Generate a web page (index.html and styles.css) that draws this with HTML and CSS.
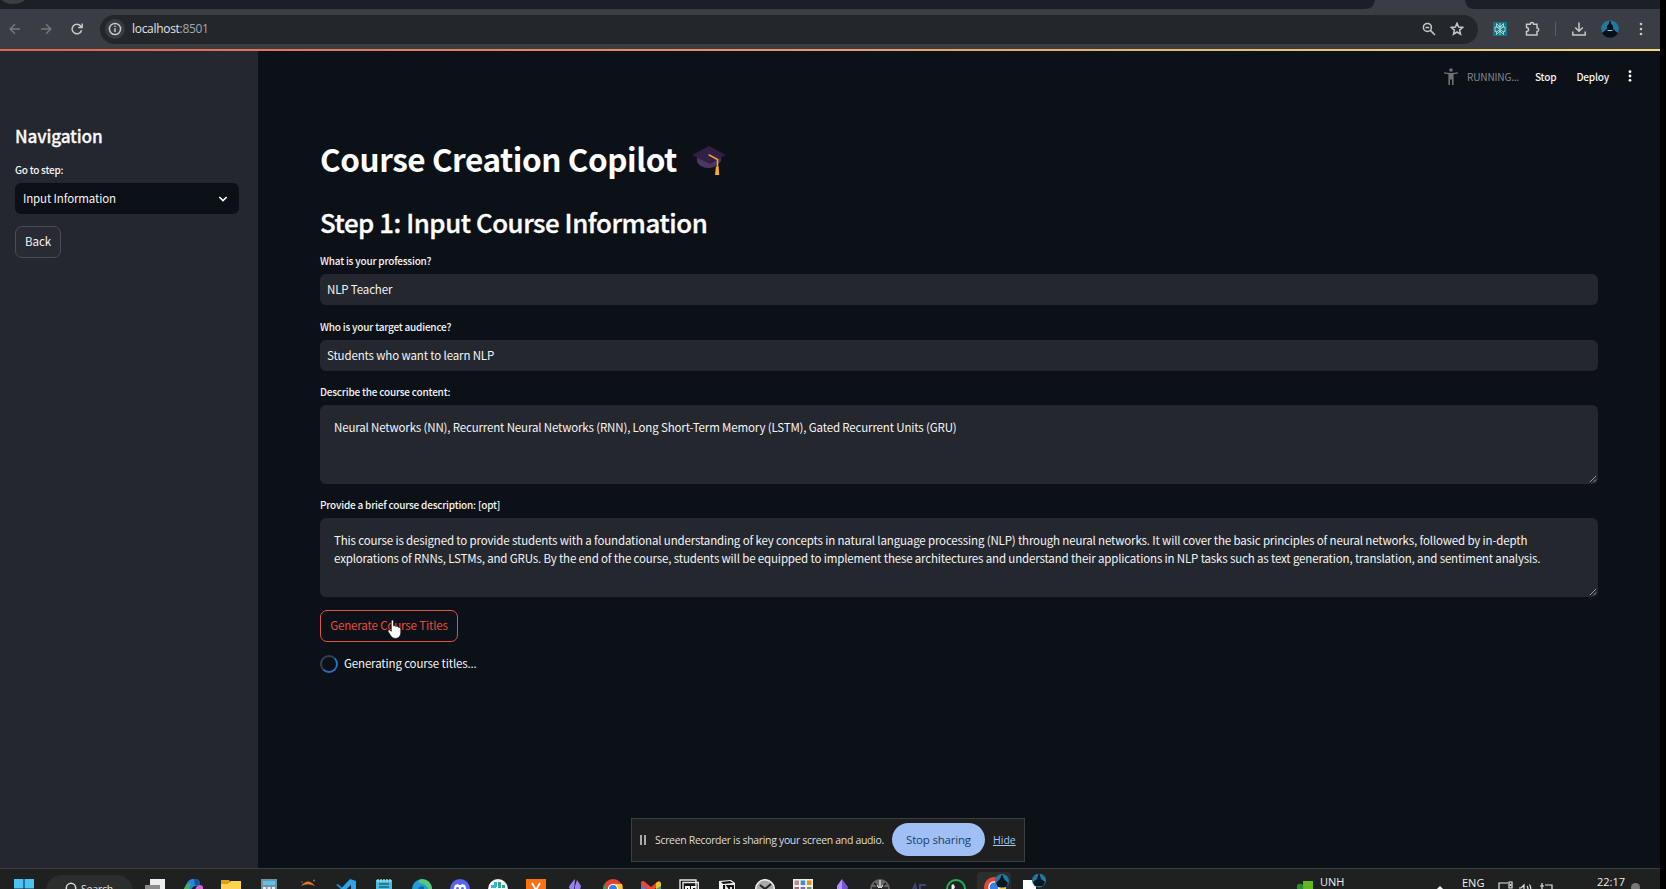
FILE: index.html
```html
<!DOCTYPE html>
<html lang="en">
<head>
<meta charset="utf-8">
<title>Course Creation Copilot</title>
<link rel="stylesheet" href="styles.css">
</head>
<body>
<div class="screen">
  <header class="browser">
    <svg class="tabstrip" width="1660" height="9" viewBox="0 0 1660 9">
      <path fill="#1a2026" d="M0 0H1375Q1374 9 1364 9H0Z"/>
      <path fill="#1a2026" d="M1465 0H1660V9H1475Q1466 9 1465 0Z"/>
      <path fill="#3a3e43" d="M2 0H25Q21 4 13 4T2 0Z"/>
    </svg>
    <div class="toolbar">
      <div class="nav-icons">
        <svg width="12" height="12" viewBox="0 0 12 12" class="line dim"><path d="M11 6H1.5M6 1.2 1.2 6 6 10.8"/></svg>
        <svg width="12" height="12" viewBox="0 0 12 12" class="line dim"><path d="M1 6H10.5M6 1.2 10.8 6 6 10.8"/></svg>
        <svg width="12" height="12" viewBox="0 0 12 12" class="line"><path d="M10.6 7.2A4.8 4.8 0 1 1 9.7 3L11 4.4M11.2.6V4.6H7.2"/></svg>
      </div>
      <div class="omnibox">
        <span class="info"><svg width="14" height="14" viewBox="0 0 14 14" class="line"><circle cx="7" cy="7" r="5.6"/><path d="M7 6.2V10M7 3.8V5"/></svg></span>
        <span class="url">localhost<span class="port">:8501</span></span>
        <svg width="14" height="14" viewBox="0 0 14 14" class="line magnify"><circle cx="5.4" cy="5.4" r="4"/><path d="M8.4 8.4 13 13M3.5 5.4H7.3"/></svg>
        <svg width="14" height="14" viewBox="0 0 14 14" class="line star"><path d="M7 1.3 8.6 5.1 12.7 5.4 9.6 8.1 10.5 12.2 7 10 3.5 12.2 4.4 8.1 1.3 5.4 5.4 5.1Z"/></svg>
      </div>
      <div class="extensions">
        <svg width="14" height="14" viewBox="0 0 14 14"><path fill="#137785" d="M0 0H14V14H0Z"/><path fill="none" stroke="#b5dfe0" stroke-width=".9" d="M7 1V13M3.5 1.5V4.7L7 7.5 10.5 4.7V1.5L7 5 3.5 1.5M2 5H12V9.5H10.5V12.5L7 9 3.5 12.5V9.5H2ZM7 7.5 3.5 10M7 7.5 10.5 10"/></svg>
        <svg width="16" height="16" viewBox="0 0 16 16" class="line"><path d="M2.5 3.2H6.2A1.7 1.7 0 0 1 9.6 3.2H13V7A1.7 1.7 0 0 1 13 10.4V14H2.5V10.6A2 2 0 0 0 2.5 6.6Z"/></svg>
        <i class="rule"></i>
        <svg width="14" height="14" viewBox="0 0 14 14" class="line"><path d="M7 .5V9M3.2 5.5 7 9.2 10.8 5.5M.8 9.5V13H13.2V9.5"/></svg>
        <svg width="18" height="18" viewBox="0 0 18 18"><circle cx="9" cy="9" r="8.8" fill="#2278a0"/><path fill="#071018" d="M8.5 1H9.5L10.3 4 12 6V9L15.5 12 17 13Q14.5 17.5 9 17.8 3.5 17.5 1 13L6 9V6L7.7 4Z"/><path stroke="#8fd3df" d="M6.5 10.5H11.5"/></svg>
        <svg width="4" height="14" viewBox="0 0 4 14" fill="#c8c9cc"><circle cx="2" cy="2" r="1.3"/><circle cx="2" cy="7" r="1.3"/><circle cx="2" cy="12" r="1.3"/></svg>
      </div>
    </div>
    <div class="accent"></div>
  </header>

  <div class="app">
    <aside class="sidebar">
      <h2 class="side-title">Navigation</h2>
      <div class="label side-label">Go to step:</div>
      <div class="select"><span>Input Information</span><svg width="10" height="8" viewBox="0 0 10 8"><path fill="none" stroke="#fff" stroke-width="1.6" d="M1.3 2 5 5.6 8.7 2"/></svg></div>
      <button class="btn">Back</button>
    </aside>
    <main class="main">
      <div class="status">
        <svg width="14" height="17" viewBox="0 0 14 17" fill="#6f7277"><circle cx="7" cy="2" r="1.8"/><path d="M0 4.2Q7 5.6 14 4.2V5.6L9.6 6.3V17H8V11.5H6V17H4.4V6.3L0 5.6Z"/></svg>
        <span class="running">RUNNING...</span>
        <span class="stop">Stop</span>
        <span class="deploy">Deploy</span>
        <svg width="4" height="12" viewBox="0 0 4 12" fill="#fff"><circle cx="2" cy="1.7" r="1.4"/><circle cx="2" cy="6" r="1.4"/><circle cx="2" cy="10.3" r="1.4"/></svg>
      </div>
      <div class="content">
        <h1 class="title"><span class="title-text">Course Creation Copilot</span>
          <svg class="cap" width="34" height="30" viewBox="0 0 34 30"><path fill="#4c3763" d="M5 10V16Q8 22 18 22 25 21 29 15V9Z"/><path fill="#321f45" d="M0 9 17 0 34 9 18 18Z"/><path fill="none" stroke="#f9a825" stroke-width="1.5" d="M16.5 8.7 25.5 13.5V22"/><path fill="#fbaa27" d="M23.9 20.5H26.6L27.2 29H23Z"/></svg>
        </h1>
        <h2 class="step">Step 1: Input Course Information</h2>
        <div class="field first"><div class="label">What is your profession?</div><div class="input">NLP Teacher</div></div>
        <div class="field"><div class="label">Who is your target audience?</div><div class="input">Students who want to learn NLP</div></div>
        <div class="field"><div class="label">Describe the course content:</div>
          <div class="area"><div>Neural Networks (NN), Recurrent Neural Networks (RNN), Long Short-Term Memory (LSTM), Gated Recurrent Units (GRU)</div>
          <svg class="grip" width="8" height="8" viewBox="0 0 8 8"><path d="M1 7 7 1M4.5 7.2 7.2 4.5"/></svg></div></div>
        <div class="field"><div class="label">Provide a brief course description: [opt]</div>
          <div class="area"><div>This course is designed to provide students with a foundational understanding of key concepts in natural language processing (NLP) through neural networks. It will cover the basic principles of neural networks, followed by in-depth</div><div>explorations of RNNs, LSTMs, and GRUs. By the end of the course, students will be equipped to implement these architectures and understand their applications in NLP tasks such as text generation, translation, and sentiment analysis.</div>
          <svg class="grip" width="8" height="8" viewBox="0 0 8 8"><path d="M1 7 7 1M4.5 7.2 7.2 4.5"/></svg></div></div>
        <button class="btn generate">Generate Course Titles
          <svg class="hand" width="15" height="20" viewBox="0 0 15 20"><path fill="#fff" stroke="#15171b" stroke-width=".7" d="M4.3 1.7Q5.4.4 6.5 1.7V7Q7.8 5.9 8.8 7.4 10.3 6.5 11.3 8.2 13.6 7.8 13.8 10V14Q13.3 19 8.7 19.4 5.7 19.5 4 17.2L1 12.3Q.5 10.7 2.2 10.7L4.3 12.3Z"/></svg>
        </button>
        <div class="spinner-row"><i class="spinner"></i><span>Generating course titles...</span></div>
      </div>
    </main>
  </div>

  <div class="share">
    <svg width="6" height="10" viewBox="0 0 6 10"><path stroke="#d8d8d8" stroke-width="1.5" d="M1 0V10M5 0V10"/></svg>
    <span class="share-text">Screen Recorder is sharing your screen and audio.</span>
    <span class="share-stop">Stop sharing</span>
    <a class="hide">Hide</a>
  </div>

  <footer class="taskbar">
    <svg class="start" width="20" height="20" viewBox="0 0 20 20" fill="#4cc2f7"><path d="M0 0H9.5V9.5H0ZM10.5 0H20V9.5H10.5ZM0 10.5H20V20H0Z"/></svg>
    <div class="search"><svg width="12" height="14" viewBox="0 0 12 14"><circle cx="6" cy="6" r="4.7" fill="none" stroke="#ddd" stroke-width="1.5"/></svg><span>Search</span></div>
    <div class="apps">
      <svg viewBox="0 0 20 20"><path fill="#eee" d="M5 0H20V15H5Z"/><path fill="#8b8b8b" d="M0 6H15V20H0Z"/></svg>
      <svg viewBox="0 0 20 20"><path fill="#2385de" d="M1 12Q4 0 9 0H14Q17 1 17 6L12 7Q8 8 6 16Z"/><path fill="#49ac65" d="M0 12Q3 3 8 4L5 15Z"/><path fill="#19529b" d="M11 0H14Q17 1 17 6H12Z"/><path fill="#ce67d2" d="M12 12Q13 6 17 6T20 11V18H12Z"/></svg>
      <svg viewBox="0 0 20 20"><path fill="#dba016" d="M0 1H8L10 4V8H0Z"/><path fill="#ffd34e" d="M0 5H7L10 2H20V18H0Z"/></svg>
      <svg viewBox="0 0 20 20"><path fill="#7b909e" d="M2 0H18V20H2Z"/><path fill="#52c6ef" d="M4 2H16V6H4Z"/><path fill="#e4edf2" d="M4 8H7V11H4ZM8.5 8H11.5V11H8.5ZM13 8H16V11H13Z"/></svg>
      <svg viewBox="0 0 20 20"><path fill="#e57626" d="M3 7Q10-2 17 7 10 3.5 3 7Z"/><circle cx="16" cy="1.5" r="1" fill="#777"/><circle cx="4" cy="3" r=".8" fill="#777"/></svg>
      <svg viewBox="0 0 20 20"><path fill="#1888cf" d="M0 6 2 5 18 18H14Z"/><path fill="#2ba4ec" d="M14 0 20 2V20H15V6L4 16 1 14Z"/></svg>
      <svg viewBox="0 0 20 20"><path fill="#4ebbdc" d="M2 1H18V20H2Z"/><path stroke="#166982" stroke-width="1.3" d="M5 5H15M5 8H15"/><path stroke="#b7e7ee" stroke-width="1.3" d="M4 0V3M7 0V3M10 0V3M13 0V3M16 0V3"/></svg>
      <svg viewBox="0 0 20 20"><circle cx="10" cy="10" r="10" fill="#219cd7"/><path fill="#59c876" d="M9 0Q19 0 20 10L17 13Q17 6 8 4 5 3 9 0Z"/><path fill="#14649e" d="M6 10Q8 6 12 8V13H6Z"/></svg>
      <svg viewBox="0 0 20 20"><circle cx="10" cy="10" r="10" fill="#5865f2"/><path fill="#fff" d="M5 6 8 5 9 6H11L12 5 15 6 17 12H3Z"/><circle cx="7.5" cy="9.5" r="1.4" fill="#5865f2"/><circle cx="12.5" cy="9.5" r="1.4" fill="#5865f2"/></svg>
      <svg viewBox="0 0 20 20"><circle cx="10" cy="10" r="10" fill="#f3f5f5"/><path fill="#36b5d8" d="M6 3H9V8H6ZM3 6H8V9H3Z"/><path fill="#2dae82" d="M10 3H13V9H10ZM14 6H17V9H14Z"/></svg>
      <svg viewBox="0 0 20 20"><path fill="#f97316" d="M0 0H20V20H0Z"/><path fill="none" stroke="#fff" stroke-width="1.8" d="M6 4 10 11 14 4M10 11V16"/></svg>
      <svg viewBox="0 0 20 20"><path fill="#9a7ff0" d="M10 0 8 6 9 13 4 8ZM12 1 16 7 14 15H10L10 7Z"/><path fill="#9a7ff0" d="M10 0 5 6 4 9 9 13Z"/></svg>
      <svg viewBox="0 0 20 20"><circle cx="10" cy="10" r="10" fill="#e34233"/><path fill="#27a258" d="M1 5 10 20Q0 20 0 10Z"/><path fill="#f9c62a" d="M10 5H19Q22 14 10 20Z"/><circle cx="10" cy="10" r="5.2" fill="#fff"/><circle cx="10" cy="10" r="4" fill="#387ee5"/></svg>
      <svg viewBox="0 0 20 20"><path fill="#3e7fe8" d="M0 4H5V18H0Z"/><path fill="#35a957" d="M15 4H20V18H15Z"/><path fill="#e84836" d="M0 3Q2 1 4 3L10 8 16 3V8L10 13 0 6Z"/><path fill="#f5bd27" d="M15 4 18 2 20 4V7L15 10Z"/></svg>
      <svg viewBox="0 0 20 20"><path fill="#111" stroke="#e8e8e8" stroke-width="1.4" d="M1 1H17V16H1ZM4 3.5H19.3V19H4Z"/><path stroke="#eee" stroke-width="2" fill="none" d="M7 12V8H10V12M13 12V8H17"/></svg>
      <svg viewBox="0 0 20 20"><path fill="#eee" d="M2 2 14 1 18 4V18L5 19 2 15Z"/><path fill="#111" d="M4 3 13 2 16 4 6 5ZM6 6H17V17H6Z"/><path stroke="#eee" stroke-width="1.8" fill="none" d="M9 15V8L14 15V8"/></svg>
      <svg viewBox="0 0 20 20"><circle cx="10" cy="10" r="9.3" fill="#aaa" stroke="#ededed" stroke-width="1.5"/><path fill="none" stroke="#222" stroke-width="2" d="M5 6 10 10 16 5"/></svg>
      <svg viewBox="0 0 20 20"><path fill="#eee" d="M0 0H20V20H0Z"/><path fill="#b98b91" d="M1.5 1.5H6V6H1.5Z"/><path fill="#3f8fc9" d="M7.7 1.5H12.2V6H7.7Z"/><path fill="#df9418" d="M14 1.5H18.5V6H14Z"/><path fill="#a06a79" d="M1.5 8H6V12H1.5Z"/><path fill="#7c6bb1" d="M7.7 8H12.2V12H7.7Z"/><path fill="#749653" d="M14 8H18.5V12H14Z"/></svg>
      <svg viewBox="0 0 20 20"><path fill="#b093fb" d="M10 0 5 7V13L10 19Z"/><path fill="#7855cf" d="M10 0 16 8 14 16 10 19Z"/></svg>
      <svg viewBox="0 0 20 20"><circle cx="10" cy="10" r="10" fill="#656565"/><path fill="none" stroke="#161616" stroke-width="1.5" d="M10 10 4 4M10 10 16 4M2 9H18"/><path stroke="#ddd" stroke-width="1.3" d="M10 1V9M7 6 9 9M13 6 11 9"/></svg>
      <svg class="ae" viewBox="0 0 20 20"><path d="M2 17 7 6 10 17M4 12H9M18 6H12V17M12 11H17"/></svg>
      <svg viewBox="0 0 20 20"><circle cx="10" cy="10" r="9" fill="#1c2521" stroke="#22b45a" stroke-width="2"/><path fill="#eee" d="M5.5 6 7.5 5 9 8 8 10 13 14H9L5.5 10Z"/></svg>
      <svg class="active" viewBox="0 0 34 20"><circle cx="17" cy="15" r="10" fill="#e34a35"/><path fill="#f9c62a" d="M18 10H29V20H18Z"/><circle cx="17" cy="15" r="5.7" fill="#fff"/><circle cx="17" cy="15" r="4.4" fill="#387ee5"/><circle cx="25" cy="9" r="7" fill="#2278a0"/><path fill="#091820" d="M24.5 3H25.5L27 7 31 11 29 15H21L19 11 23 7Z"/></svg>
      <svg class="badge" viewBox="0 0 26 20"><path fill="#fff" d="M0 6H13V20H0Z"/><circle cx="16" cy="6.5" r="7" fill="#2278a0"/><path fill="#091820" d="M15.5 0H16.5L18 5 22 8 20 12H12L10 8 14 5Z"/></svg>
    </div>
    <div class="tray">
      <svg class="news" width="17" height="14" viewBox="0 0 17 14"><path fill="#65b51c" d="M7 0H17V14H7Z"/><circle cx="4" cy="6" r="3.2" fill="#288c31"/></svg>
      <span class="unh">UNH</span>
      <svg class="chev" width="8" height="8" viewBox="0 0 8 8"><path fill="none" stroke="#eee" stroke-width="1.5" d="M1 5 4 2 7 5"/></svg>
      <span class="eng">ENG</span>
      <svg class="sys" width="56" height="14" viewBox="0 0 56 14"><path fill="none" stroke="#e5e5e5" stroke-width="1.2" d="M10 2H1V11H13M11 1H14V7H11ZM12.5 3V5M21 7H23L26 4V12M29 5Q31 8 29 10M31.5 3.5Q34 8 31.5 11M42 5H46M44 2V8M47 4H54V12"/></svg>
      <span class="clock">22:17</span>
      <i class="dot"></i>
    </div>
  </footer>
</div>
</body>
</html>
```
FILE: styles.css
```css
* { box-sizing: border-box; }
html, body { margin: 0; background: #000; }
body { height: 889px; overflow: hidden; font-family: "Noto Sans CJK SC", "Noto Sans", sans-serif; }
svg { display: block; flex: none; }
.screen { position: relative; width: 1660px; height: 889px; display: flex; flex-direction: column; overflow: hidden; }

.browser { height: 51px; background: #3a3d43; flex: none; }
.toolbar { height: 40px; display: flex; align-items: center; border-radius: 0 6px 0 0; }
.line { fill: none; stroke: #c6c8cb; stroke-width: 1.5; }
.dim { stroke: #75787e; }
.nav-icons { width: 100px; display: flex; gap: 19px; padding-left: 9px; flex: none; }
.omnibox { width: 1378px; height: 29px; border-radius: 15px; background: #23272c; display: flex; align-items: center; padding: 0 14px 0 5px; }
.info { width: 20px; height: 20px; border-radius: 50%; background: #383b40; display: grid; place-items: center; }
.url { margin-left: 7px; font: 12px/20px "Open Sans", sans-serif; color: #e2e3e4; letter-spacing: -.3px; flex: 1; }
.port { color: #a4a7aa; }
.star { margin-left: 14px; }
.extensions { display: flex; align-items: center; width: 182px; padding-left: 15px; }
.extensions svg:nth-child(2) { margin-left: 17px; }
.rule { width: 1px; height: 14px; background: #5b5e64; margin: 0 16px 0 15px; }
.extensions svg:nth-child(5) { margin-left: 15px; }
.extensions svg:nth-child(6) { margin-left: 20px; }
.accent { height: 2px; background: linear-gradient(90deg, #dc6650, #e98a68 40%, #e8bd79 75%, #f2d883); }

.app { height: 817px; display: flex; flex: none; }
.sidebar { width: 258px; background: #24272f; padding: 73px 18px 0 15px; flex: none; }
.side-title { margin: 0; font-size: 17.2px; line-height: 24px; color: #fafafa; font-weight: 500; -webkit-text-stroke: .3px #fafafa; letter-spacing: -.15px; }
.label { font-size: 10px; line-height: 16px; height: 16px; color: #f4f5f6; white-space: nowrap; font-weight: 500; letter-spacing: -.2px; }
.side-label { margin-top: 14px; letter-spacing: -.25px; }
.select { margin-top: 5px; width: 224px; height: 31px; border-radius: 6px; background: #0b0f16; color: #f5f5f5; display: flex; align-items: center; justify-content: space-between; padding: 0 11px 0 8px; font-size: 11.5px; letter-spacing: -.14px; line-height: 15px; }
.select span { padding-bottom: 1px; }
.btn { margin: 12px 0 0; width: 46px; height: 32px; padding: 0 0 2px; border-radius: 7px; border: 1px solid #4a4d55; background: #282b33; color: #f5f5f5; font: 11.5px/28px "Noto Sans CJK SC", sans-serif; display: block; }

.main { flex: 1; background: #0c1017; }
.status { height: 50px; display: flex; align-items: center; justify-content: flex-end; padding-right: 28px; color: #f5f5f5; font-size: 10.1px; font-weight: 500; letter-spacing: -.2px; }
.running { color: #85888d; margin: 0 16px 0 9px; font-weight: 400; }
.deploy { margin: 0 19px 0 20px; }
.content { padding: 36px 62px 0; display: flex; flex-direction: column; }
.title { margin: 0 0 26px; height: 42px; display: flex; gap: 15px; align-items: center; color: #fff; font-size: 31.5px; line-height: 42px; font-weight: 700; }
.title-text { white-space: nowrap; letter-spacing: -.44px; }
.cap { margin-top: 6px; }
.step { margin: 0 0 14px; font-size: 25.8px; line-height: 34px; height: 34px; color: #fff; font-weight: 500; -webkit-text-stroke: .35px #fff; letter-spacing: -.43px; }
.field { margin-bottom: 13px; }
.first { margin-bottom: 14px; }
.input { margin-top: 5px; height: 31px; border-radius: 6px; background: #24272e; color: #f5f5f5; font-size: 11.5px; line-height: 30px; padding-left: 7px; letter-spacing: -.14px; }
.area { margin-top: 5px; position: relative; height: 79px; border-radius: 6px; background: #24272e; color: #f5f5f5; font-size: 11.5px; line-height: 18px; padding: 13px 14px; white-space: nowrap; letter-spacing: -.153px; }
.grip { position: absolute; right: 1px; bottom: 1px; fill: none; stroke: #a0a3a8; stroke-width: .9; }
.generate { position: relative; margin: 0; width: 138px; border-color: #e25346; background: #0c1119; color: #ea4c3a; white-space: nowrap; letter-spacing: -.14px; }
.hand { position: absolute; left: 66px; top: 8px; }
.spinner-row { margin-top: 13px; display: flex; align-items: center; gap: 6px; height: 18px; font-size: 11.5px; color: #f5f5f5; letter-spacing: -.14px; line-height: 16px; }
.spinner-row span { padding-bottom: 2px; }
.spinner { width: 18px; height: 18px; border-radius: 50%; border: 2px solid #344050; border-right-color: #2d6dbd; border-bottom-color: #2d6dbd; }

.share { position: absolute; left: 631px; top: 818px; width: 394px; height: 44px; border: 1px solid #3b3e42; background: #1f1f1f; display: flex; align-items: center; padding: 0 0 1px 8px; font: 10.5px "Open Sans", sans-serif; color: #dedede; white-space: nowrap; }
.share-text { margin-left: 9px; width: 237px; letter-spacing: -.33px; }
.share-stop { width: 93px; height: 33px; border-radius: 17px; background: #a0c0f5; color: #1d3c6b; display: grid; place-items: center; font-size: 11.5px; letter-spacing: -.2px; }
.hide { margin-left: 8px; color: #a9c7f5; text-decoration: underline; }

.taskbar { height: 21px; border-top: 1px solid #3b3d3f; background: #1f2020; display: flex; align-items: flex-start; overflow: hidden; flex: none; }
.start { margin: 10px 0 0 14px; }
.search { margin: 6px 0 0 12px; width: 87px; height: 32px; border-radius: 16px; background: #2c2d2d; display: flex; padding: 7px 0 0 19px; gap: 4px; font: 10.5px/15px "Open Sans", sans-serif; letter-spacing: -.2px; color: #e3e3e3; flex: none; }
.apps { margin-left: 3px; display: grid; grid-template-columns: repeat(24, 38.15px); justify-items: center; flex: none; }
.apps svg { width: 20px; height: 20px; margin-top: 10px; }
.apps .active { width: 34px; height: 20px; margin-top: 3px; background: #2c2d2d; border-radius: 4px 4px 0 0; }
.apps .badge { width: 26px; height: 20px; margin-top: 5px; margin-left: 8px; }
.ae { fill: none; stroke: #3d4777; stroke-width: 2; }
.tray { margin-left: auto; width: 364px; display: flex; align-items: flex-start; font: 11px/14px "Open Sans", sans-serif; color: #eee; }
.news { margin-top: 12px; }
.unh { margin: 6px 0 0 7px; width: 115px; }
.chev { margin-top: 16px; margin-left: 1px; }
.eng { margin: 7px 0 0 18px; width: 36px; }
.sys { margin-top: 12px; }
.clock { margin: 6px 0 0 43px; width: 34px; }
.dot { width: 9px; height: 9px; margin-top: 14px; border-radius: 50%; background: #777; }
```
